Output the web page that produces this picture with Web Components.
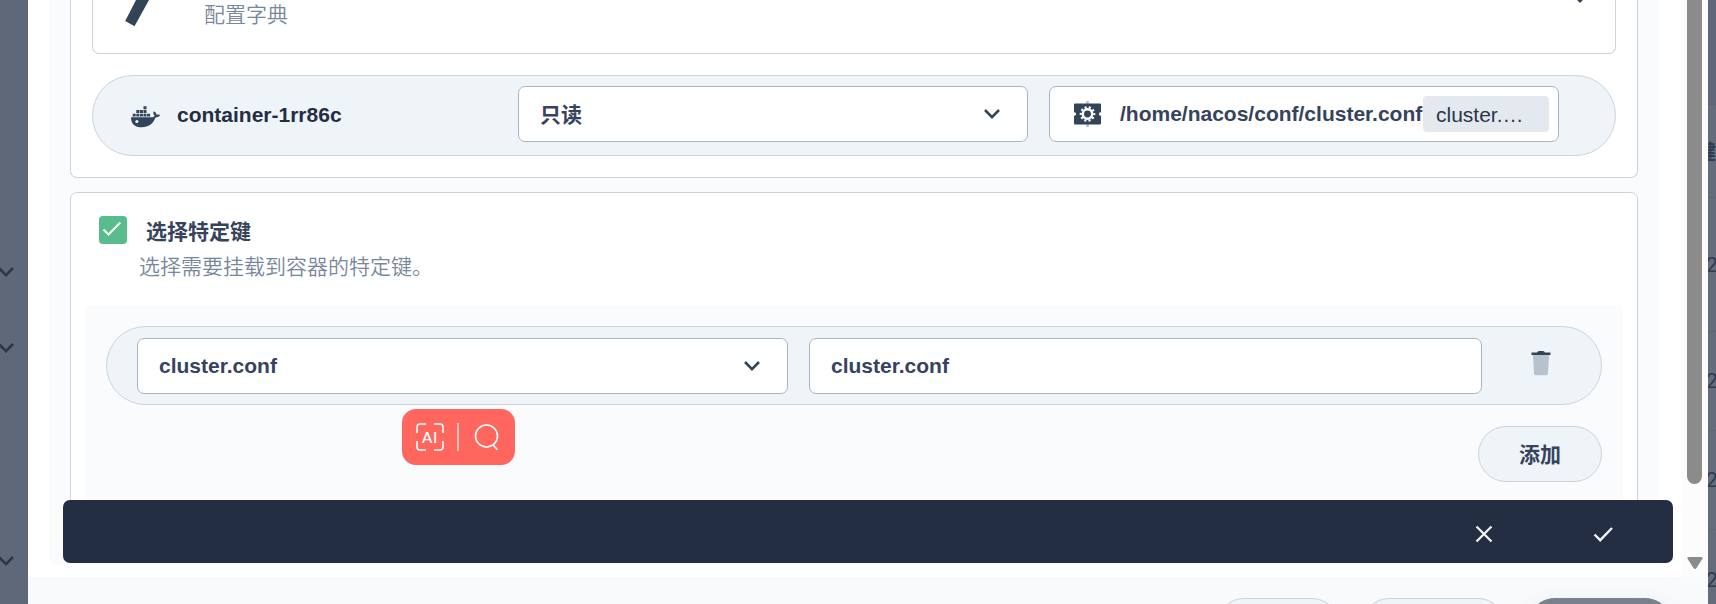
<!DOCTYPE html>
<html lang="zh">
<head>
<meta charset="utf-8">
<title>挂载配置字典</title>
<style>
html,body{margin:0;height:100%;overflow:hidden}
body{font:21px/32px "Liberation Sans","Noto Sans CJK SC",sans-serif;color:#36435c}
</style>
</head>
<body>
<mount-page></mount-page>
<script>
const define=(name,html)=>customElements.define(name,class extends HTMLElement{
  constructor(){super();this.attachShadow({mode:'open'}).innerHTML='<style>*{box-sizing:border-box}svg{display:block;flex:none;overflow:visible}</style>'+html;}
});

define('chevron-icon',`<style>:host{display:block;width:18px;height:12px}</style>
<svg width="18" height="12" viewBox="0 0 18 12"><path d="M2 2l7 7.2L16 2" fill="none" stroke="var(--c,#36435c)" stroke-width="2.6"/></svg>`);

define('field-box',`<style>:host{display:flex;align-items:center;box-sizing:border-box;height:56px;padding:0 20px 0 21px;border:1px solid #abb4be;border-radius:7px;background:#fff;font-weight:700;white-space:nowrap}
.v{flex:1}</style><div class="v"><slot></slot></div><slot name="end"></slot>`);

define('pill-row',`<style>:host{display:flex;box-sizing:border-box;border:1px solid #ccd3db;border-radius:41px;background:#eff4f9}</style><slot></slot>`);

define('round-button',`<style>:host{display:flex;box-sizing:border-box;align-items:center;justify-content:center;height:56px;padding-top:2px;border:1px solid #ccd3db;border-radius:28px;background:#eff4f9;font-weight:700}
:host([dark]){background:#79808e;border-color:#79808e;color:#fff;box-shadow:0 14px 28px rgba(36,46,66,.16)}</style><slot></slot>`);

define('docker-icon',`<style>:host{display:block}</style>
<svg width="30" height="22" viewBox="0 0 30 22" fill="#324558"><path d="M0 11.200H20.700C22.300 11.200 23.200 10.600 23.600 9.700 22.100 8.300 21.900 6.900 22.900 5.300 24.600 6.200 25.300 7.400 25.500 8.700 27 8.300 28.300 8.400 29.200 9.100 28.400 10.800 26.600 11.500 24.500 11.600 22 18 17.700 21.300 10.800 21.300 3.400 21.300 0 17.600 0 11.200Z"/>
<path d="M1.700 7.700h3v2.900h-3zM5.300 7.700h3v2.900h-3zM8.900 7.700h3v2.900h-3zM12.500 7.700h3v2.900h-3zM16.100 7.700h3v2.900h-3zM5.300 4.100h3V7h-3zM8.900 4.100h3V7h-3zM12.500 4.100h3V7h-3zM12.500.3h3v3h-3z"/><circle cx="5.900" cy="15.500" r="1.600" fill="#eff4f9"/></svg>`);

define('config-icon',`<style>:host{display:block}</style>
<svg width="27" height="26" viewBox="0 0 27 26"><path d="M12.200 0h2.600v26h-2.600z" fill="#b6c2cd"/><path d="M1 2.500h25q1 0 1 1v7.800h-.4a1.700 1.700 0 0 0 0 3.400h.4v7.800q0 1-1 1H1q-1 0-1-1v-7.800h.4a1.700 1.700 0 0 0 0-3.400H0V3.500q0-1 1-1z" fill="#324558"/>
<circle cx="13.500" cy="13" r="4.700" fill="none" stroke="#fff" stroke-width="2.500"/><circle cx="13.500" cy="13" r="6.700" fill="none" stroke="#fff" stroke-width="2.200" stroke-dasharray="2.100 2.109" stroke-dashoffset="1.050"/></svg>`);

define('trash-icon',`<style>:host{display:block}</style>
<svg width="20" height="25" viewBox="0 0 20 25"><path d="M2 4h16l-1 18.700q-.2 1.600-1.800 1.600H4.800q-1.600 0-1.800-1.600z" fill="#b6c2cd"/><path d="M.5 1.500H6Q7 .1 8.200.1h3.600Q13 .1 14 1.500h5.500V4H.5z" fill="#324558"/></svg>`);

define('side-left',`<style>:host{display:block;width:28px;background:#5f6878;overflow:hidden}
chevron-icon{--c:#2b374c;margin-left:-3px}.a{margin-top:266px}.b{margin-top:64px}.c{margin-top:201px}</style>
<chevron-icon class="a"></chevron-icon><chevron-icon class="b"></chevron-icon><chevron-icon class="c"></chevron-icon>`);

define('side-right',`<style>:host{display:block;width:8px;background:#656c7b;overflow:hidden;color:#2f3b51;font:21px/30px Roboto,"Noto Sans CJK SC",sans-serif}
div{border-bottom:1px solid #5c6577;text-indent:-2px;white-space:nowrap;display:flex;align-items:center}
.h{height:93px;padding-top:2px;text-indent:-13px;font-weight:700}</style>
<div style="height:105px;background:#5f687b"></div><div class="h">键</div><div style="height:134px">2</div><div style="height:99px">2</div><div style="height:99px">2</div><div style="height:99px;padding-top:2px">2</div>`);

define('mount-card',`<style>:host{display:block;box-sizing:border-box;height:178px;border:1px solid #ccd3db;border-top:0;border-radius:0 0 7px 7px;background:#fff;padding:0 21px}
.res{height:54px;border:1px solid #ccd3db;border-top:0;border-radius:0 0 7px 7px;display:flex;margin-bottom:21px;overflow:hidden;color:#79879c;font-weight:350}
.res span{margin:-1px 0 0 55px;flex:1}.res svg{margin-left:32px}.res chevron-icon{margin:-8px 26px 0 0}
pill-row{height:81px;padding:10px 56px 0 38px}
docker-icon{margin-top:20px}.name{width:341px;margin:13px 0 0 16px;font-weight:700;color:#242e42}
.mode{width:510px;padding-right:26px}.mode span{display:block;padding-top:2px}.path{width:510px;margin-left:21px;padding:0 9px 0 24px}
.in{display:flex;align-items:center;gap:19px}
.tag{width:126px;height:36px;border-radius:4px;background:#e3e9ef;color:#2c3648;font-weight:400;line-height:37px;padding-left:13px}</style>
<div class="res"><svg width="24" height="27"><path d="M11 0h13L9.500 26.200.2 21z" fill="#324558"/></svg><span>配置字典</span><chevron-icon></chevron-icon></div>
<pill-row><docker-icon></docker-icon><div class="name">container-1rr86c</div>
<field-box class="mode"><span>只读</span><chevron-icon slot="end"></chevron-icon></field-box>
<field-box class="path"><div class="in"><config-icon></config-icon><span>/home/nacos/conf/cluster.conf</span></div><div slot="end" class="tag">cluster.…</div></field-box></pill-row>`);

define('keys-card',`<style>:host{display:block;box-sizing:border-box;height:360px;margin-top:14px;border:1px solid #ccd3db;border-radius:7px;background:#fff;padding:23px 14px 0}
.t{display:flex;margin-left:14px;height:34px}.box{width:28px;height:28px;border-radius:4px;background:#57bd8c}
.t b{margin-left:19px}.s{margin:1px 0 0 54px;font-weight:350;color:#79879c}
.list{margin-top:22px;height:240px;border-radius:7px;background:#fafbfd;padding:21px}
pill-row{height:79px;padding:11px 50px 0 30px}.k{width:651px;padding-right:26px}.n{width:673px;margin-left:21px;padding-left:21px}
trash-icon{margin:13px 0 0 49px}round-button{width:124px;margin:21px 0 0 auto}</style>
<div class="t"><div class="box"><svg width="28" height="28"><path d="M4.500 13.500l5 5L21.300 6.500" fill="none" stroke="#fff" stroke-width="2"/></svg></div><b>选择特定键</b></div>
<div class="s">选择需要挂载到容器的特定键。</div>
<div class="list"><pill-row><field-box class="k">cluster.conf<chevron-icon slot="end"></chevron-icon></field-box><field-box class="n">cluster.conf</field-box><trash-icon></trash-icon></pill-row><round-button>添加</round-button></div>`);

define('action-bar',`<style>:host{position:absolute;z-index:2;left:35px;top:500px;width:1610px;height:63px;box-sizing:border-box;border-radius:7px;background:#242e42;display:flex;align-items:center;justify-content:flex-end;gap:100px;padding:5px 60px 0 0}</style>
<svg width="18" height="18"><path d="M1.500 1.500l15 15m0-15l-15 15" stroke="#f0f1f3" stroke-width="2.300" fill="none"/></svg>
<svg width="20" height="18"><path d="M1.500 9.500l5.700 5.700L19 3" stroke="#f0f1f3" stroke-width="2.400" fill="none"/></svg>`);

define('ai-popover',`<style>:host{position:absolute;z-index:3;left:374px;top:409px;width:113px;height:56px;border-radius:14px;background:#ff665d;display:flex;align-items:center;box-sizing:border-box;padding-left:14px}
.f{position:relative;width:28px;height:28px}.f span{position:absolute;inset:0;font:600 15px/28px Lato,sans-serif;letter-spacing:.8px;color:#fff;text-align:center}
i{width:1.500px;height:28px;background:#ffc1bd;margin:0 15px 0 13px}</style>
<div class="f"><svg width="28" height="28"><path d="M1 10V4q0-3 3-3h6M18 1h6q3 0 3 3v6M27 18v6q0 3-3 3h-6M10 27H4q-3 0-3-3v-6" fill="none" stroke="#fff" stroke-width="1.600"/></svg><span>AI</span></div><i></i>
<svg width="26" height="28"><circle cx="12.500" cy="13" r="11" fill="none" stroke="#fff" stroke-width="1.600"/><path d="M19 21.800l4.300 5" stroke="#fff" stroke-width="1.700"/></svg>`);

define('scroll-bar',`<style>:host{width:27px;height:577px;background:#fcfcfc;display:flex;flex-direction:column;padding-left:6px;box-sizing:border-box}
.th{width:15px;height:484px;border-radius:0 0 8px 8px;background:#8b8b8b;margin-bottom:73px}svg{margin-left:-.5px}</style>
<div class="th"></div><svg width="16" height="12"><path d="M2 0h12q2.500 0 1.300 2L9.500 11Q8 13 6.500 11L.7 2Q-.5 0 2 0z" fill="#8b8b8b"/></svg>`);

define('mount-page',`<style>:host{display:flex;width:1716px;height:604px;overflow:hidden}
.modal{position:relative;width:1680px;background:#fff}
.top{display:flex;height:577px}.body{width:1610px;height:565px;margin:0 22px 0 21px;padding:0 21px;background:#fafbfd;border-radius:0 0 7px 7px;overflow:hidden}
.foot{height:27px;background:#f9fafc;padding:21px 35px 0;display:flex;justify-content:flex-end;gap:21px;overflow:hidden}</style>
<side-left></side-left>
<div class="modal"><div class="top"><div class="body"><mount-card></mount-card><keys-card></keys-card></div><scroll-bar></scroll-bar></div>
<div class="foot"><round-button style="width:124px"></round-button><round-button style="width:145px"></round-button><round-button dark style="width:146px"></round-button></div>
<action-bar></action-bar><ai-popover></ai-popover></div>
<side-right></side-right>`);
</script>
</body>
</html>
